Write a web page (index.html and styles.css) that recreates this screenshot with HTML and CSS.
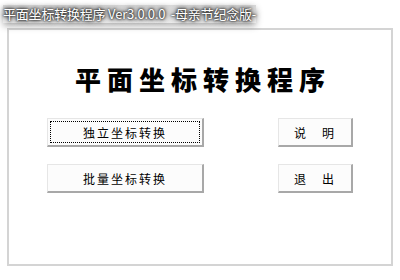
FILE: index.html
```html
<!DOCTYPE html>
<html lang="zh">
<head>
<meta charset="utf-8">
<title>平面坐标转换程序</title>
<link rel="stylesheet" href="styles.css">
</head>
<body>
<div class="titlebar"><span class="title-text">平面坐标转换程序 Ver3.0.0.0 &nbsp;-母亲节纪念版-</span></div>
<div class="frame">
  <h1 class="heading">平面坐标转换程序</h1>
  <div class="rows">
    <div class="row">
      <button class="btn btn-wide focused"><span class="focus">独立坐标转换</span></button>
      <button class="btn btn-small">说&nbsp;&nbsp;&nbsp;明</button>
    </div>
    <div class="row">
      <button class="btn btn-wide">批量坐标转换</button>
      <button class="btn btn-small">退&nbsp;&nbsp;&nbsp;出</button>
    </div>
  </div>
</div>
</body>
</html>
```
FILE: styles.css
```css
html, body {
  margin: 0;
  padding: 0;
  background: #ffffff;
  width: 400px;
  height: 280px;
  overflow: hidden;
  font-family: "Noto Sans CJK SC", "DejaVu Sans", sans-serif;
}
.titlebar {
  height: 28px;
  padding-left: 3px;
  box-sizing: border-box;
}
.title-text {
  display: inline-block;
  font-size: 13px;
  line-height: 18px;
  letter-spacing: -0.2px;
  color: #ffffff;
  white-space: nowrap;
  background: linear-gradient(#d8d8d8, #ececec);
  box-shadow: 0 3px 7px rgba(0,0,0,0.3);
  text-shadow: 0 0 2px #222, 0 0 3px #333, 0 0 5px #444, 0 0 6px #555;
}
.frame {
  margin-left: 7px;
  width: 386px;
  height: 238px;
  box-sizing: border-box;
  border: 2px solid #d4d4d4;
  padding: 0 38px;
}
.heading {
  margin: 34px 0 0 0;
  text-align: center;
  font-size: 26px;
  line-height: 30px;
  font-weight: 900;
  letter-spacing: 6px;
  padding-left: 6px;
  color: #000;
}
.rows {
  margin-top: 24px;
  display: flex;
  flex-direction: column;
  gap: 17px;
}
.row {
  display: flex;
  justify-content: space-between;
  align-items: flex-start;
}
.btn {
  font-family: "Noto Sans CJK SC", sans-serif;
  font-size: 12px;
  color: #000;
  background: #fcfcfc;
  border-top: 1px solid #e6e6e6;
  border-left: 1px solid #e6e6e6;
  border-right: 2px solid #a8a8a8;
  border-bottom: 2px solid #a8a8a8;
  padding: 0;
  margin: 0;
  height: 29px;
  letter-spacing: 2px;
}
.btn-wide {
  width: 157px;
}
.btn-small {
  width: 75px;
}
.focused {
  padding: 2px;
}
.focus {
  display: flex;
  align-items: center;
  justify-content: center;
  height: 100%;
  box-sizing: border-box;
  border: 1px dotted #000;
}
```
